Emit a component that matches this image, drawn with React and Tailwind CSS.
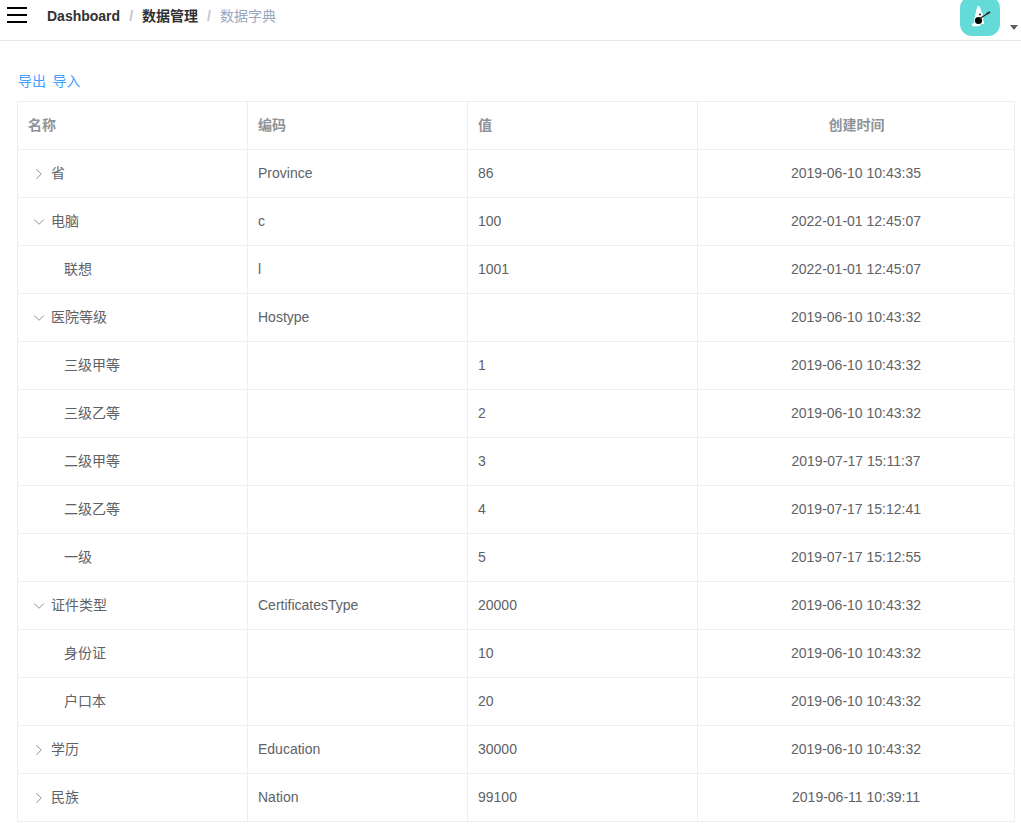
import React from "react";
import { ChevronRight, ChevronDown } from "lucide-react";

const rows = [
  { name: "省", code: "Province", value: "86", time: "2019-06-10 10:43:35", arrow: "right" },
  { name: "电脑", code: "c", value: "100", time: "2022-01-01 12:45:07", arrow: "down" },
  { name: "联想", code: "l", value: "1001", time: "2022-01-01 12:45:07" },
  { name: "医院等级", code: "Hostype", value: "", time: "2019-06-10 10:43:32", arrow: "down" },
  { name: "三级甲等", code: "", value: "1", time: "2019-06-10 10:43:32" },
  { name: "三级乙等", code: "", value: "2", time: "2019-06-10 10:43:32" },
  { name: "二级甲等", code: "", value: "3", time: "2019-07-17 15:11:37" },
  { name: "二级乙等", code: "", value: "4", time: "2019-07-17 15:12:41" },
  { name: "一级", code: "", value: "5", time: "2019-07-17 15:12:55" },
  { name: "证件类型", code: "CertificatesType", value: "20000", time: "2019-06-10 10:43:32", arrow: "down" },
  { name: "身份证", code: "", value: "10", time: "2019-06-10 10:43:32" },
  { name: "户口本", code: "", value: "20", time: "2019-06-10 10:43:32" },
  { name: "学历", code: "Education", value: "30000", time: "2019-06-10 10:43:32", arrow: "right" },
  { name: "民族", code: "Nation", value: "99100", time: "2019-06-11 10:39:11", arrow: "right" },
];

const Logo = () => (
  <div className="w-10 h-10 -mt-1 rounded-xl bg-[#64dbd8] flex items-center justify-center">
    <svg width="26" height="26" viewBox="0 0 26 26">
      <path d="M11 2.5 C13 3 14 6 14 8 C16 10 16 13 16 15 L17 21 L14 21 L13 23 L6 23.5 L4.5 21 L7 20 C7 16 8 12 9 9 C9 7 10 5 11 2.5 Z" fill="#fff" />
      <circle cx="11.5" cy="17.5" r="3.6" fill="#000" />
      <circle cx="13" cy="11.5" r="1" fill="#222" />
      <path d="M12 16 L20 11" stroke="#222" strokeWidth="1.2" />
      <path d="M19.5 11 L23 9" stroke="#222" strokeWidth="1.8" />
    </svg>
  </div>
);

const Navbar = () => (
  <div className="h-[41px] border-b border-[#e6e6e6] flex items-start justify-between">
    <div className="flex items-center h-8">
      <div className="ml-[7px] w-5 flex flex-col gap-[5px] -mt-[2px]">
        <div className="h-[2px] bg-black" />
        <div className="h-[2px] bg-black" />
        <div className="h-[2px] bg-black" />
      </div>
      <div className="ml-5 flex items-center text-[14px] text-[#303133] font-bold">
        <span>Dashboard</span>
        <span className="mx-[9px] text-[#c0c4cc]">/</span>
        <span>数据管理</span>
        <span className="mx-[9px] text-[#c0c4cc]">/</span>
        <span className="text-[#97a8be] font-normal">数据字典</span>
      </div>
    </div>
    <div className="flex items-start mr-[3px]">
      <Logo />
      <div className="ml-[10px] mt-[25px] w-0 h-0 border-x-4 border-x-transparent border-t-[5px] border-t-[#5a5e66]" />
    </div>
  </div>
);

const DictRow = ({ row }) => {
  const cell = "px-[10px] flex items-center border-r border-[#ebeef5]";
  return (
    <div className="grid grid-cols-[230px_220px_230px_317px] h-12 border-b border-[#ebeef5] text-[14px] text-[#606266]">
      <div className={cell}>
        {row.arrow ? (
          <>
            <span className="w-[13px] h-[13px] ml-[4px] mr-[6px] flex items-center justify-center text-[#85807c]">
              {row.arrow === "right" ? (
                <ChevronRight size={18} strokeWidth={1.2} className="shrink-0" />
              ) : (
                <ChevronDown size={18} strokeWidth={1.2} className="shrink-0" />
              )}
            </span>
            <span>{row.name}</span>
          </>
        ) : (
          <span className="pl-[36px]">{row.name}</span>
        )}
      </div>
      <div className={cell}>{row.code}</div>
      <div className={cell}>{row.value}</div>
      <div className="flex items-center justify-center pl-[10px] pr-[11px]">{row.time}</div>
    </div>
  );
};

export default function App() {
  return (
    <div className="w-[1021px] h-[833px] overflow-hidden bg-white font-['Liberation_Sans','Noto_Sans_CJK_SC',sans-serif]">
      <Navbar />
      <div className="pl-[17px] pr-[6px] pt-[32px]">
        <div className="flex gap-[6.5px] pl-[1px] h-[16px] mb-[12px] items-center text-[14px] text-[#409eff] leading-none">
          <span>导出</span>
          <span>导入</span>
        </div>
        <div className="border-t border-x border-[#ebeef5]">
          <div className="grid grid-cols-[230px_220px_230px_317px] h-12 border-b border-[#ebeef5] text-[14px] font-bold text-[#909399]">
            <div className="px-[10px] flex items-center border-r border-[#ebeef5]">名称</div>
            <div className="px-[10px] flex items-center border-r border-[#ebeef5]">编码</div>
            <div className="px-[10px] flex items-center border-r border-[#ebeef5]">值</div>
            <div className="flex items-center justify-center">创建时间</div>
          </div>
          {rows.map((row) => (
            <DictRow key={row.name} row={row} />
          ))}
        </div>
      </div>
    </div>
  );
}
